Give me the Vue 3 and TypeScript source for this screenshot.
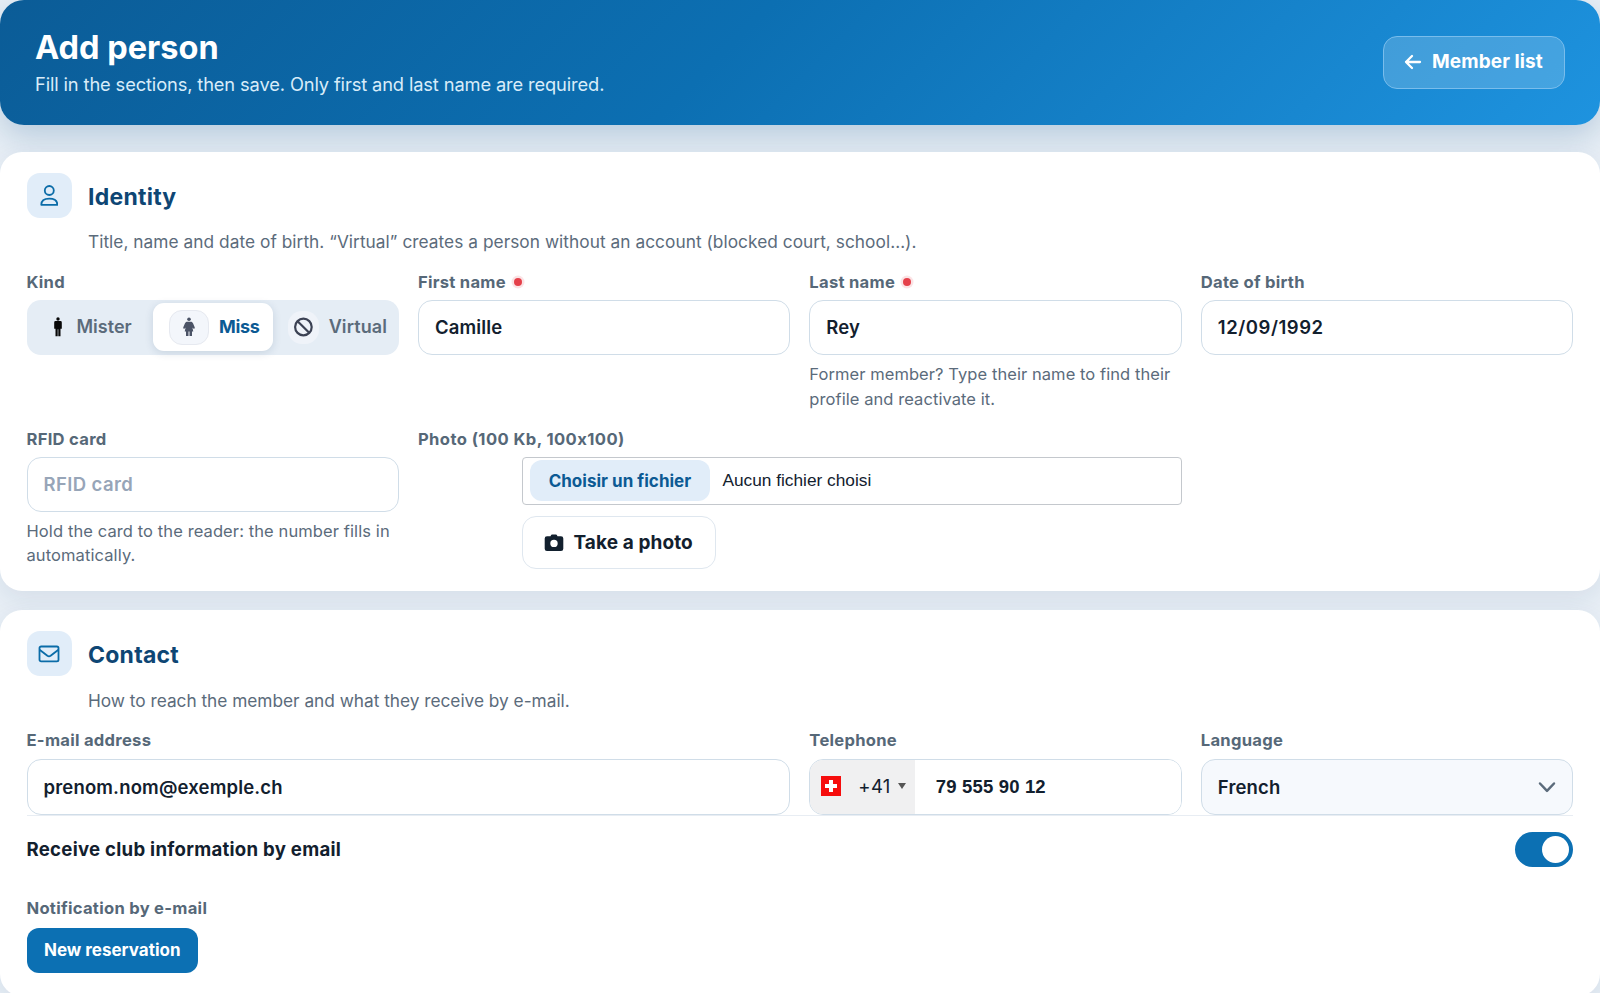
<script setup lang="ts">
import { ref } from 'vue'

const firstName = ref('Camille')
const lastName = ref('Rey')
const birth = ref('12/09/1992')
const rfid = ref('')
const email = ref('prenom.nom@exemple.ch')
const phone = ref('79 555 90 12')
const kind = ref<'mister' | 'miss' | 'virtual'>('miss')
const newsletter = ref(true)
</script>

<template>
  <main class="page">
    <header class="hero">
      <div>
        <h1><span>Add person</span></h1>
        <p class="lead"><span>Fill in the sections, then save. Only first and last name are required.</span></p>
      </div>
      <button class="back" type="button">
        <svg width="18" height="16" viewBox="0 0 18 16" fill="none" stroke="currentColor" stroke-width="2.3" stroke-linecap="round" stroke-linejoin="round"><path d="M16 8H2M8 2 2 8l6 6" /></svg>
        <span>Member list</span>
      </button>
    </header>

    <section class="card identity">
      <div class="head">
        <div class="tile">
          <svg width="18" height="22" viewBox="0 0 18 22" fill="none" stroke="currentColor" stroke-width="1.8" stroke-linejoin="round"><circle cx="9.300" cy="5.500" r="4.500" /><path d="M1.300 19.800c0-3.900 3-6.100 8-6.100s8 2.200 8 6.100z" /></svg>
        </div>
        <h2><span>Identity</span></h2>
      </div>
      <p class="desc d1"><span>Title, name and date of birth. “Virtual” creates a person without an account (blocked court, school…).</span></p>
      <div class="grid">
        <div class="field">
          <label><span>Kind</span></label>
          <div class="segments">
            <button type="button" class="seg mister" :class="{ active: kind === 'mister' }" @click="kind = 'mister'">
              <svg width="10" height="20" viewBox="0 0 10 20" fill="#080808"><circle cx="5" cy="2" r="1.7" /><path d="M2.5 4.1h5Q8.8 4.1 8.8 5.5v6.2H7.5V19.3H5.3v-7h-.6v7H2.5V11.7H1.2V5.5Q1.2 4.1 2.5 4.1z" /></svg>
              <span>Mister</span>
            </button>
            <button type="button" class="seg miss" :class="{ active: kind === 'miss' }" @click="kind = 'miss'">
              <i class="pill"><svg width="12" height="20" viewBox="0 0 12 20" fill="#4b5366"><circle cx="6" cy="2.300" r="1.800" /><path d="M4.300 4.700h3.400c1.200 0 1.900.6 2.300 1.600l1.700 4c.4 1.100-1 1.900-1.700.9l-.6-.7.900 4H9v4.400H6.500v-4.400h-1v4.400H3v-4.400H1.700l.9-4-.6.7c-.7 1-2.100.2-1.700-.9l1.700-4c.4-1 1.100-1.600 2.300-1.600z" /></svg></i>
              <span>Miss</span>
            </button>
            <button type="button" class="seg virtual" :class="{ active: kind === 'virtual' }" @click="kind = 'virtual'">
              <i class="round"><svg width="20" height="20" viewBox="0 0 20 20" fill="none" stroke="#3c4254" stroke-width="2.200"><circle cx="10.400" cy="10" r="8.300" /><path d="m4.600 4.200 11.600 11.600" /></svg></i>
              <span>Virtual</span>
            </button>
          </div>
        </div>
        <div class="field">
          <label><span>First name</span><b class="dot"></b></label>
          <input v-model="firstName">
        </div>
        <div class="field">
          <label><span>Last name</span><b class="dot"></b></label>
          <input v-model="lastName">
          <p class="hint"><span>Former member? Type their name to find their<br>profile and reactivate it.</span></p>
        </div>
        <div class="field">
          <label><span>Date of birth</span></label>
          <input v-model="birth" class="date">
        </div>
        <div class="field second">
          <label><span>RFID card</span></label>
          <input v-model="rfid" class="rfid" placeholder="RFID card">
          <p class="hint tight"><span>Hold the card to the reader: the number fills in<br>automatically.</span></p>
        </div>
        <div class="field wide second">
          <label class="photolabel"><span>Photo (100 Kb, 100x100)</span></label>
          <div class="photo">
            <div class="file">
              <button type="button" class="choose"><span>Choisir un fichier</span></button>
              <span class="none">Aucun fichier choisi</span>
            </div>
            <button type="button" class="take">
              <svg width="20" height="18" viewBox="0 0 20 18" fill="currentColor"><path fill-rule="evenodd" d="M6.500 2.200 7.100.9Q7.400.4 8 .4h4q.6 0 .9.500l.6 1.300H17q2.300 0 2.300 2.300v10.200q0 2.300-2.300 2.300H3Q.7 17 .7 14.700V4.500Q.7 2.200 3 2.200zM10 5.700a3.700 3.700 0 1 0 0 7.400 3.700 3.700 0 0 0 0-7.400z" /></svg>
              <span>Take a photo</span>
            </button>
          </div>
        </div>
      </div>
    </section>

    <section class="card contact">
      <div class="head">
        <div class="tile">
          <svg width="22" height="18" viewBox="0 0 22 18" fill="none" stroke="currentColor" stroke-width="1.800" stroke-linejoin="round" stroke-linecap="round"><rect x="1.500" y="1.500" width="19" height="14.800" rx="1.600" /><path d="m1.900 5 7.500 5.800q1.600 1.100 3.200 0l7.500-5.800" /></svg>
        </div>
        <h2><span>Contact</span></h2>
      </div>
      <p class="desc d2"><span>How to reach the member and what they receive by e-mail.</span></p>
      <div class="grid">
        <div class="field wide">
          <label><span>E-mail address</span></label>
          <input v-model="email">
        </div>
        <div class="field">
          <label><span>Telephone</span></label>
          <div class="phone">
            <button type="button" class="code">
              <svg width="20" height="20" viewBox="0 0 20 20"><path fill="#f60d0d" d="M0 0h20v20H0z" /><path fill="#fff" d="M8 4h4v4h4v4h-4v4H8v-4H4V8h4z" /></svg>
              <span>+41</span>
              <svg width="8" height="6" viewBox="0 0 8 6" fill="#555"><path d="M0 0h8L4 6z" /></svg>
            </button>
            <input v-model="phone" class="number">
          </div>
        </div>
        <div class="field">
          <label><span>Language</span></label>
          <button type="button" class="select">
            <span>French</span>
            <svg width="18" height="12" viewBox="0 0 18 12" fill="none" stroke="#5b6b7b" stroke-width="2.500" stroke-linecap="round" stroke-linejoin="round"><path d="m2 2.500 7 7.300 7-7.300" /></svg>
          </button>
        </div>
      </div>
      <div class="row">
        <span class="rowlabel">Receive club information by email</span>
        <button type="button" class="toggle" :class="{ on: newsletter }" aria-label="Receive club information by email" @click="newsletter = !newsletter"><i></i></button>
      </div>
      <label class="notif"><span>Notification by e-mail</span></label>
      <button type="button" class="new"><span>New reservation</span></button>
    </section>
  </main>
</template>

<style>
html, body { margin: 0; height: 100%; overflow: hidden; background: #e8eff6; }
</style>

<style scoped>
* { box-sizing: border-box; }
.page { height: 993px; overflow: hidden; background: #e8eff6; font-family: Inter, "Liberation Sans", sans-serif; font-feature-settings: "calt" 0; color: #12202e; }
h1, h2, p { margin: 0; }
button, input { font-family: inherit; font-feature-settings: inherit; margin: 0; border: 0; padding: 0; background: none; color: inherit; text-align: left; }
span { white-space: nowrap; }
svg { display: block; flex: none; }
.hero { height: 125px; border-radius: 24px; padding: 0 35px; display: flex; justify-content: space-between; align-items: center; color: #fff; background: linear-gradient(135deg, #0b5c97 0%, #0c6fb2 45%, #1e93df 100%); box-shadow: 0 12px 32px rgba(12, 78, 134, .22); }
h1 { font-size: 32.500px; line-height: 42px; font-weight: 700; }
.lead { font-size: 18.300px; letter-spacing: -.13px; line-height: 26px; margin-top: 2px; margin-bottom: 2px; color: #d8ecf9; }
.back { width: 182px; height: 53px; border: 1.500px solid #79bdec; border-radius: 14px; background: rgba(255, 255, 255, .18); display: flex; align-items: center; gap: 10px; padding: 0 0 2px 20px; font-size: 19px; letter-spacing: .1px; font-weight: 700; }
.card { background: #fff; border-radius: 22px; padding: 21px 27px 22px 26.500px; box-shadow: 0 8px 26px rgba(20, 60, 100, .09); position: relative; }
.identity { margin-top: 27px; height: 439px; }
.contact { margin-top: 19px; height: 386px; }
.head { display: flex; align-items: center; gap: 16px; height: 45px; }
.tile { width: 45.500px; height: 45px; border-radius: 13px; background: #e1edf9; color: #0b6ca8; display: flex; align-items: center; justify-content: center; }
h2 { font-size: 23px; line-height: 30px; font-weight: 700; letter-spacing: .25px; color: #0e4674; padding-top: 2px; }
.desc { font-size: 17.300px; letter-spacing: .04px; line-height: 24px; margin: 12px 0 17.500px 61.500px; color: #5b6b7b; }
.d2 { margin-top: 12.500px; margin-bottom: 17px; letter-spacing: -.02px; }
.grid { display: grid; grid-template-columns: repeat(4, 1fr); column-gap: 19.200px; row-gap: 17px; }
.wide { grid-column: span 2; }
label { display: flex; align-items: center; height: 20px; line-height: 20px; margin-bottom: 8px; font-size: 16.600px; letter-spacing: .27px; font-weight: 700; color: #566878; }
.photolabel { letter-spacing: .41px; }
.contact .field label { margin-bottom: 9.500px; }
.dot { width: 8px; height: 8px; border-radius: 50%; background: #e5404a; box-shadow: 0 0 0 2.500px #fbe3e5; margin-left: 8px; }
input, .select { display: flex; width: 100%; height: 55px; border: 1.500px solid #d0dde8; border-radius: 14px; padding: 0 16px; background: #fff; font-size: 18.500px; letter-spacing: .16px; font-weight: 600; color: #12202e; outline: none; }
.contact input, .contact .select { height: 55.500px; }
.date { letter-spacing: .55px; }
.rfid { letter-spacing: .4px; }
input::placeholder { color: #97a5b8; opacity: 1; }
.hint { font-size: 16.500px; line-height: 25px; letter-spacing: .07px; margin-top: 7.500px; color: #5b6b7b; }
.second { margin-top: -.5px; }
.tight { line-height: 24.300px; letter-spacing: .1px; }
.segments { display: grid; grid-template-columns: repeat(3, 1fr); gap: 3px; padding: 3.500px 3px; height: 55px; border-radius: 14px; background: #e5edf5; }
.seg { display: flex; align-items: center; border-radius: 11px; font-size: 18px; font-weight: 600; color: #5b6b7b; }
.seg span { position: relative; top: -.6px; }
.seg.active { background: #fff; color: #0c5a94; box-shadow: 0 2px 8px rgba(20, 60, 100, .14); }
.mister { padding-left: 23.500px; gap: 13.500px; }
.miss { padding-left: 16px; gap: 10.500px; }
.miss span { font-weight: 700; letter-spacing: -.35px; }
.virtual { padding-left: 12px; gap: 10px; }
.virtual span { letter-spacing: .1px; }
.pill { width: 40px; height: 35px; border: 1px solid #e6e9f0; border-radius: 13px; background: #f3f6fb; display: flex; align-items: center; justify-content: center; }
.round { width: 31px; height: 33px; border-radius: 14px; background: #eff3f9; display: flex; align-items: center; justify-content: center; }
.photo { margin-left: 104px; }
.file { height: 48.500px; border: 1.500px solid #c4c8cd; border-radius: 4px; display: flex; align-items: center; padding-left: 7px; }
.choose { width: 180px; height: 41px; border-radius: 12px; background: #e1edf9; color: #0c5a94; font-size: 17px; font-weight: 700; letter-spacing: .02px; text-align: center; }
.none { margin-left: 12.500px; font-family: "Liberation Sans", sans-serif; font-size: 17.300px; }
.take { margin-top: 11px; width: 194px; height: 53px; border: 1.500px solid #dfe7ef; border-radius: 14px; display: flex; align-items: center; gap: 9.500px; padding-left: 21px; font-size: 19px; letter-spacing: .1px; font-weight: 700; }
.phone { display: flex; height: 55.500px; border: 1.500px solid #d0dde8; border-radius: 14px; overflow: hidden; }
.code { flex: none; width: 104.500px; background: #f0f0f1; display: flex; align-items: center; padding: 0 0 1.500px 11px; font-size: 18.500px; letter-spacing: .3px; }
.code span { margin: 0 7px 0 17px; }
.contact .number { border: 0; border-radius: 0; height: 100%; padding-left: 21px; font-family: "Liberation Sans", sans-serif; font-weight: 700; font-size: 18.500px; }
.select { align-items: center; justify-content: space-between; background: #f6f9fd; }
.row { border-top: 1.500px solid #e8edf3; height: 69px; display: flex; align-items: center; justify-content: space-between; }
.rowlabel { font-size: 18.600px; font-weight: 700; letter-spacing: .27px; position: relative; top: -1px; }
.toggle { width: 58.500px; height: 35px; border-radius: 18px; background: #aab8c6; padding: 4px; display: flex; }
.toggle.on { background: #0c70b3; justify-content: flex-end; }
.toggle i { width: 27px; height: 27px; border-radius: 50%; background: #fff; }
.notif { margin-top: 14px; margin-bottom: 10.500px; }
.new { width: 171.500px; height: 45px; border-radius: 12px; background: #0c70b3; color: #fff; font-size: 17px; font-weight: 700; text-align: center; padding-bottom: 1.500px; }
</style>
